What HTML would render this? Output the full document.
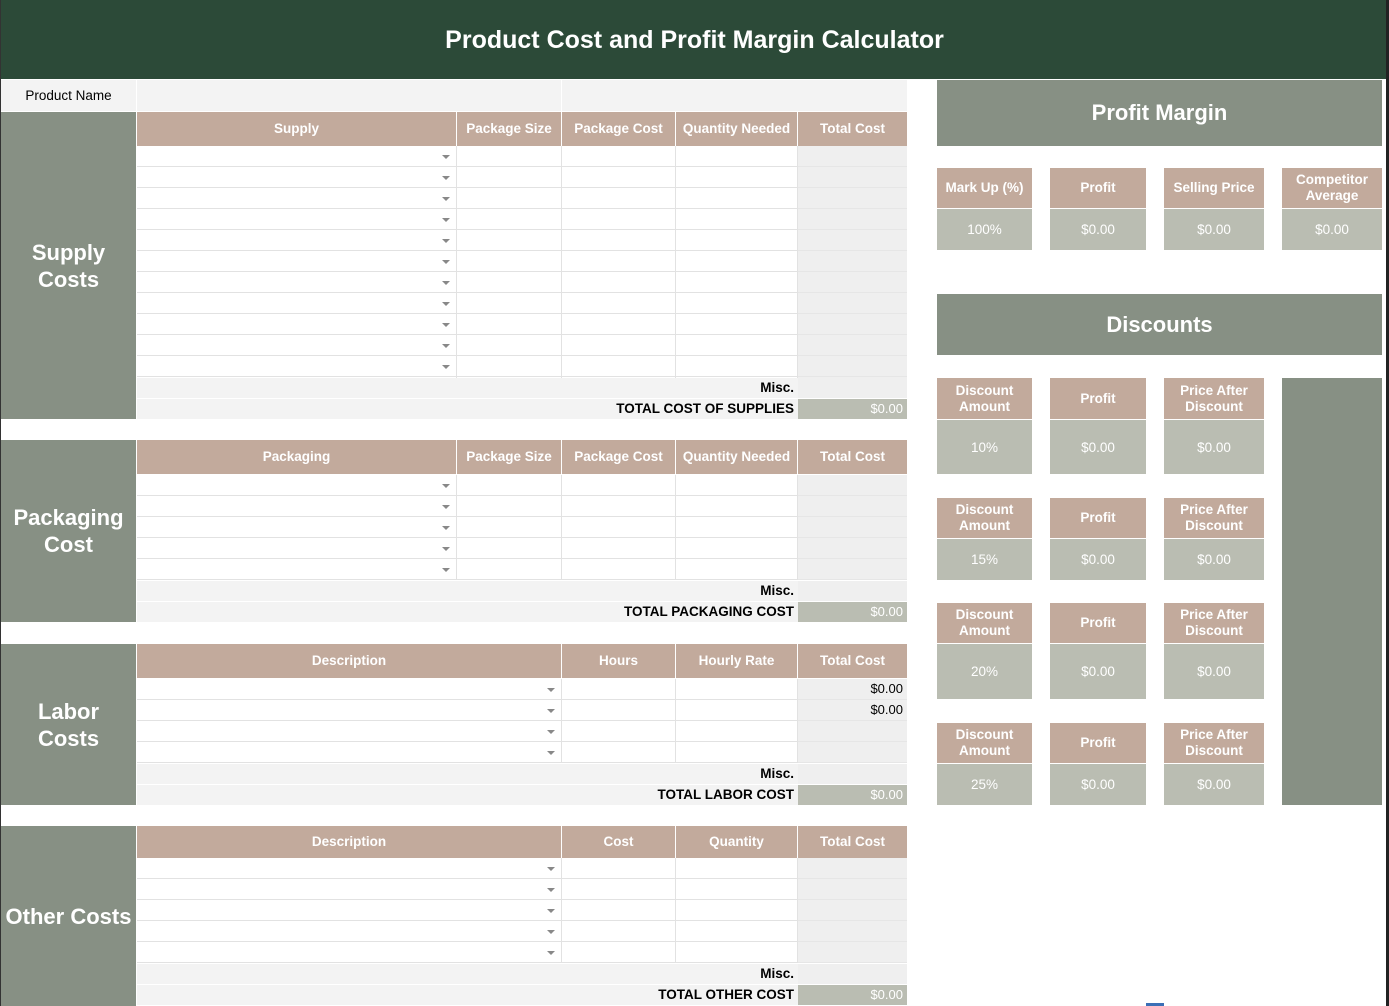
<!DOCTYPE html>
<html><head><meta charset="utf-8">
<style>
*{margin:0;padding:0;box-sizing:border-box}
body{width:1389px;height:1006px;position:relative;background:#fff;font-family:"Liberation Sans",Arial,sans-serif;overflow:hidden}
div{position:absolute}
.top{left:0;top:0;width:1389px;height:79px;background:#2c4a38;color:#fff;font-size:25px;font-weight:bold;text-align:center;line-height:80px}
.sage{background:#879084;color:#fff;font-weight:bold;display:flex;align-items:center;justify-content:center;text-align:center}
.lab{font-size:22px;line-height:27px}
.th{background:#c2aa9c;color:#fff;font-weight:bold;font-size:13.5px;display:flex;align-items:center;justify-content:center;text-align:center;border-right:1px solid #fff;line-height:16px}
.grid{background:#fff;background-image:repeating-linear-gradient(to bottom,transparent 0,transparent 20px,#e2e2e2 20px,#e2e2e2 21px)}
.vl{width:1px;background:#e2e2e2}
.tc{background:#efefef;background-image:repeating-linear-gradient(to bottom,transparent 0,transparent 20px,#e6e6e6 20px,#e6e6e6 21px)}
.ar{width:0;height:0;border-left:4px solid transparent;border-right:4px solid transparent;border-top:4px solid #888}
.misc{background:#f3f3f3;font-size:13.5px;font-weight:bold;text-align:right;padding-right:4px;line-height:20px}
.tv{background:#babdb2;color:#fff;font-size:13px;text-align:right;padding-right:4px;line-height:20px}
.ch{background:#c2aa9c;color:#fff;font-weight:bold;font-size:13.5px;display:flex;align-items:center;justify-content:center;text-align:center;line-height:16px}
.cv{background:#babdb2;color:#fff;font-size:13.5px;display:flex;align-items:center;justify-content:center}
.num{font-size:13px;text-align:right;padding-right:4px;line-height:20px;color:#000}
</style></head><body>
<div class="top">Product Cost and Profit Margin Calculator</div>
<div style="left:1386px;top:0;width:3px;height:1006px;background:#222"></div>
<div style="left:0;top:0;width:1px;height:1006px;background:#333"></div>

<!-- Product name -->
<div style="left:1px;top:80px;width:135px;height:31px;background:#f3f3f3;font-size:13.5px;text-align:center;line-height:31px">Product Name</div>
<div style="left:137px;top:80px;width:424px;height:31px;background:#f3f3f3"></div>
<div style="left:562px;top:80px;width:345px;height:31px;background:#f3f3f3"></div>

<!-- SUPPLY -->
<div class="sage lab" style="left:1px;top:112px;width:135px;height:307px">Supply<br>Costs</div>
<div class="th" style="left:137px;top:112px;width:320px;height:34px">Supply</div>
<div class="th" style="left:457px;top:112px;width:105px;height:34px">Package Size</div>
<div class="th" style="left:562px;top:112px;width:114px;height:34px">Package Cost</div>
<div class="th" style="left:676px;top:112px;width:122px;height:34px">Quantity Needed</div>
<div class="th" style="left:798px;top:112px;width:109px;height:34px;border:0">Total Cost</div>
<div class="grid" style="left:137px;top:146px;width:661px;height:232px"></div>
<div class="tc" style="left:798px;top:146px;width:109px;height:232px"></div>
<div class="vl" style="left:456px;top:146px;height:232px"></div>
<div class="vl" style="left:561px;top:146px;height:232px"></div>
<div class="vl" style="left:675px;top:146px;height:232px"></div>
<div class="vl" style="left:797px;top:146px;height:232px"></div>
<div class="ar" style="left:442px;top:155px"></div>
<div class="ar" style="left:442px;top:176px"></div>
<div class="ar" style="left:442px;top:197px"></div>
<div class="ar" style="left:442px;top:218px"></div>
<div class="ar" style="left:442px;top:239px"></div>
<div class="ar" style="left:442px;top:260px"></div>
<div class="ar" style="left:442px;top:281px"></div>
<div class="ar" style="left:442px;top:302px"></div>
<div class="ar" style="left:442px;top:323px"></div>
<div class="ar" style="left:442px;top:344px"></div>
<div class="ar" style="left:442px;top:365px"></div>
<div class="misc" style="left:137px;top:378px;width:661px;height:20px">Misc.</div>
<div style="left:798px;top:378px;width:109px;height:20px;background:#efefef"></div>
<div class="misc" style="left:137px;top:399px;width:661px;height:20px">TOTAL COST OF SUPPLIES</div>
<div class="tv" style="left:798px;top:399px;width:109px;height:20px">$0.00</div>

<!-- PACKAGING -->
<div class="sage lab" style="left:1px;top:440px;width:135px;height:182px">Packaging<br>Cost</div>
<div class="th" style="left:137px;top:440px;width:320px;height:34px">Packaging</div>
<div class="th" style="left:457px;top:440px;width:105px;height:34px">Package Size</div>
<div class="th" style="left:562px;top:440px;width:114px;height:34px">Package Cost</div>
<div class="th" style="left:676px;top:440px;width:122px;height:34px">Quantity Needed</div>
<div class="th" style="left:798px;top:440px;width:109px;height:34px;border:0">Total Cost</div>
<div class="grid" style="left:137px;top:475px;width:661px;height:105px"></div>
<div class="tc" style="left:798px;top:475px;width:109px;height:105px"></div>
<div class="vl" style="left:456px;top:475px;height:105px"></div>
<div class="vl" style="left:561px;top:475px;height:105px"></div>
<div class="vl" style="left:675px;top:475px;height:105px"></div>
<div class="vl" style="left:797px;top:475px;height:105px"></div>
<div class="ar" style="left:442px;top:484px"></div>
<div class="ar" style="left:442px;top:505px"></div>
<div class="ar" style="left:442px;top:526px"></div>
<div class="ar" style="left:442px;top:547px"></div>
<div class="ar" style="left:442px;top:568px"></div>
<div class="misc" style="left:137px;top:581px;width:661px;height:20px">Misc.</div>
<div style="left:798px;top:581px;width:109px;height:20px;background:#efefef"></div>
<div class="misc" style="left:137px;top:602px;width:661px;height:20px">TOTAL PACKAGING COST</div>
<div class="tv" style="left:798px;top:602px;width:109px;height:20px">$0.00</div>

<!-- LABOR -->
<div class="sage lab" style="left:1px;top:644px;width:135px;height:161px">Labor<br>Costs</div>
<div class="th" style="left:137px;top:644px;width:425px;height:34px">Description</div>
<div class="th" style="left:562px;top:644px;width:114px;height:34px">Hours</div>
<div class="th" style="left:676px;top:644px;width:122px;height:34px">Hourly Rate</div>
<div class="th" style="left:798px;top:644px;width:109px;height:34px;border:0">Total Cost</div>
<div class="grid" style="left:137px;top:679px;width:661px;height:84px"></div>
<div class="tc" style="left:798px;top:679px;width:109px;height:84px"></div>
<div class="vl" style="left:561px;top:679px;height:84px"></div>
<div class="vl" style="left:675px;top:679px;height:84px"></div>
<div class="vl" style="left:797px;top:679px;height:84px"></div>
<div class="ar" style="left:547px;top:688px"></div>
<div class="ar" style="left:547px;top:709px"></div>
<div class="ar" style="left:547px;top:730px"></div>
<div class="ar" style="left:547px;top:751px"></div>
<div class="num" style="left:798px;top:679px;width:109px;height:20px">$0.00</div>
<div class="num" style="left:798px;top:700px;width:109px;height:20px">$0.00</div>
<div class="misc" style="left:137px;top:764px;width:661px;height:20px">Misc.</div>
<div style="left:798px;top:764px;width:109px;height:20px;background:#efefef"></div>
<div class="misc" style="left:137px;top:785px;width:661px;height:20px">TOTAL LABOR COST</div>
<div class="tv" style="left:798px;top:785px;width:109px;height:20px">$0.00</div>

<!-- OTHER -->
<div class="sage lab" style="left:1px;top:826px;width:135px;height:180px">Other Costs</div>
<div class="th" style="left:137px;top:826px;width:425px;height:32px">Description</div>
<div class="th" style="left:562px;top:826px;width:114px;height:32px">Cost</div>
<div class="th" style="left:676px;top:826px;width:122px;height:32px">Quantity</div>
<div class="th" style="left:798px;top:826px;width:109px;height:32px;border:0">Total Cost</div>
<div class="grid" style="left:137px;top:858px;width:661px;height:105px"></div>
<div class="tc" style="left:798px;top:858px;width:109px;height:105px"></div>
<div class="vl" style="left:561px;top:858px;height:105px"></div>
<div class="vl" style="left:675px;top:858px;height:105px"></div>
<div class="vl" style="left:797px;top:858px;height:105px"></div>
<div class="ar" style="left:547px;top:867px"></div>
<div class="ar" style="left:547px;top:888px"></div>
<div class="ar" style="left:547px;top:909px"></div>
<div class="ar" style="left:547px;top:930px"></div>
<div class="ar" style="left:547px;top:951px"></div>
<div class="misc" style="left:137px;top:964px;width:661px;height:20px">Misc.</div>
<div style="left:798px;top:964px;width:109px;height:20px;background:#efefef"></div>
<div class="misc" style="left:137px;top:985px;width:661px;height:20px">TOTAL OTHER COST</div>
<div class="tv" style="left:798px;top:985px;width:109px;height:20px">$0.00</div>

<!-- RIGHT -->
<div class="sage" style="left:937px;top:80px;width:445px;height:66px;font-size:22px">Profit Margin</div>
<div class="ch" style="left:937px;top:168px;width:95px;height:40px">Mark Up (%)</div>
<div class="ch" style="left:1050px;top:168px;width:96px;height:40px">Profit</div>
<div class="ch" style="left:1164px;top:168px;width:100px;height:40px">Selling Price</div>
<div class="ch" style="left:1282px;top:168px;width:100px;height:40px">Competitor<br>Average</div>
<div class="cv" style="left:937px;top:209px;width:95px;height:41px">100%</div>
<div class="cv" style="left:1050px;top:209px;width:96px;height:41px">$0.00</div>
<div class="cv" style="left:1164px;top:209px;width:100px;height:41px">$0.00</div>
<div class="cv" style="left:1282px;top:209px;width:100px;height:41px">$0.00</div>

<div class="sage" style="left:937px;top:294px;width:445px;height:61px;font-size:22px">Discounts</div>
<div style="left:1282px;top:378px;width:100px;height:427px;background:#879084"></div>

<div class="ch" style="left:937px;top:378px;width:95px;height:41px">Discount<br>Amount</div>
<div class="ch" style="left:1050px;top:378px;width:96px;height:41px">Profit</div>
<div class="ch" style="left:1164px;top:378px;width:100px;height:41px">Price After<br>Discount</div>
<div class="cv" style="left:937px;top:420px;width:95px;height:54px">10%</div>
<div class="cv" style="left:1050px;top:420px;width:96px;height:54px">$0.00</div>
<div class="cv" style="left:1164px;top:420px;width:100px;height:54px">$0.00</div>

<div class="ch" style="left:937px;top:498px;width:95px;height:40px">Discount<br>Amount</div>
<div class="ch" style="left:1050px;top:498px;width:96px;height:40px">Profit</div>
<div class="ch" style="left:1164px;top:498px;width:100px;height:40px">Price After<br>Discount</div>
<div class="cv" style="left:937px;top:539px;width:95px;height:41px">15%</div>
<div class="cv" style="left:1050px;top:539px;width:96px;height:41px">$0.00</div>
<div class="cv" style="left:1164px;top:539px;width:100px;height:41px">$0.00</div>

<div class="ch" style="left:937px;top:603px;width:95px;height:40px">Discount<br>Amount</div>
<div class="ch" style="left:1050px;top:603px;width:96px;height:40px">Profit</div>
<div class="ch" style="left:1164px;top:603px;width:100px;height:40px">Price After<br>Discount</div>
<div class="cv" style="left:937px;top:644px;width:95px;height:55px">20%</div>
<div class="cv" style="left:1050px;top:644px;width:96px;height:55px">$0.00</div>
<div class="cv" style="left:1164px;top:644px;width:100px;height:55px">$0.00</div>

<div class="ch" style="left:937px;top:723px;width:95px;height:40px">Discount<br>Amount</div>
<div class="ch" style="left:1050px;top:723px;width:96px;height:40px">Profit</div>
<div class="ch" style="left:1164px;top:723px;width:100px;height:40px">Price After<br>Discount</div>
<div class="cv" style="left:937px;top:764px;width:95px;height:41px">25%</div>
<div class="cv" style="left:1050px;top:764px;width:96px;height:41px">$0.00</div>
<div class="cv" style="left:1164px;top:764px;width:100px;height:41px">$0.00</div>

<div style="left:1146px;top:1003px;width:18px;height:3px;background:#3b6fb6"></div>
</body></html>
